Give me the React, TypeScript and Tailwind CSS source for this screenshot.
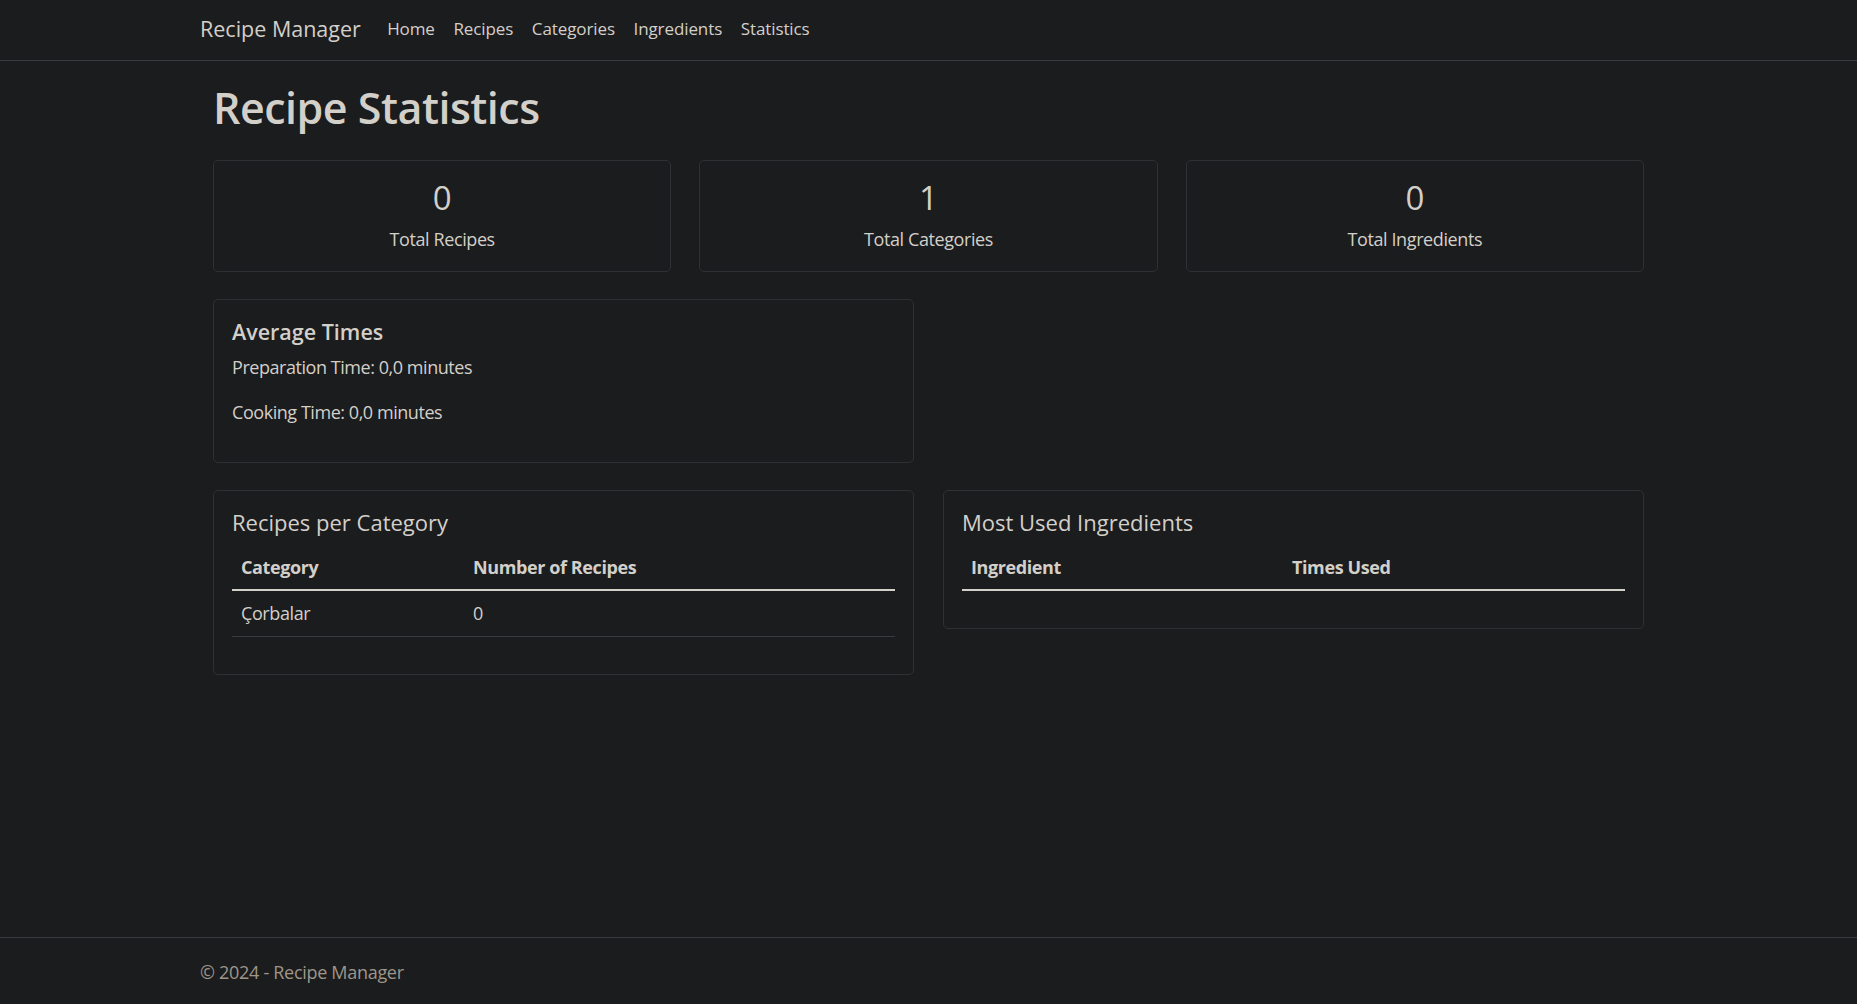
import React from "react";

function StatCard({ value, label }: { value: string; label: string }) {
  return (
    <div className="flex-1 rounded-[5px] border border-[#2e3033] pt-[17px] pb-[18px] text-center">
      <div className="text-[33px] leading-[40px] font-medium">{value}</div>
      <div className="mt-[7px] text-[18px] leading-[28px] tracking-[-0.4px]">{label}</div>
    </div>
  );
}

export default function App() {
  return (
    <div className="flex h-[1004px] flex-col bg-[#1b1c1e] font-['Open_Sans',sans-serif] text-[#d3cfc9]">
      <nav className="h-[61px] border-b border-[#383c3f]">
        <div className="mx-auto flex h-[60px] w-[1457px] items-center pb-[2px]">
          <span className="mr-[17px] text-[21.5px] leading-[28px]">Recipe Manager</span>
          <ul className="flex items-center">
            {["Home", "Recipes", "Categories", "Ingredients", "Statistics"].map((l) => (
              <li key={l} className="px-[9.3px] text-[17px] leading-[26px] tracking-[-0.1px]">
                {l}
              </li>
            ))}
          </ul>
        </div>
      </nav>

      <main className="flex-1">
        <div className="mx-auto w-[1431px] pt-[19px]">
          <h1 className="mb-[25px] text-[43px] leading-[55px] font-semibold tracking-[-0.5px]">Recipe Statistics</h1>

          <div className="flex gap-[28px]">
            <StatCard value="0" label="Total Recipes" />
            <StatCard value="1" label="Total Categories" />
            <StatCard value="0" label="Total Ingredients" />
          </div>

          <div className="mt-[27px] flex gap-[29px]">
            <div className="w-[701px] rounded-[5px] border border-[#2e3033] px-[18px] pt-[19px] pb-[19px]">
              <h5 className="mb-[8px] text-[21.5px] leading-[26px] font-semibold">Average Times</h5>
              <p className="mb-[17px] text-[18px] leading-[28px] tracking-[-0.45px]">Preparation Time: 0,0 minutes</p>
              <p className="mb-[17px] text-[18px] leading-[28px] tracking-[-0.45px]">Cooking Time: 0,0 minutes</p>
            </div>
          </div>

          <div className="mt-[27px] flex items-start gap-[29px]">
            <div className="w-[701px] rounded-[5px] border border-[#2e3033] px-[18px] pt-[17px] pb-[18px]">
              <h5 className="mb-[8px] text-[22px] leading-[28px]">Recipes per Category</h5>
              <table className="mb-[19px] w-full border-collapse text-left text-[18px] leading-[28px] tracking-[-0.4px]">
                <thead>
                  <tr className="border-b-2 border-[#d3cfc9]">
                    <th className="w-[232px] px-[9px] pt-[9px] pb-[8px] font-bold">Category</th>
                    <th className="px-[9px] pt-[9px] pb-[8px] font-bold">Number of Recipes</th>
                  </tr>
                </thead>
                <tbody>
                  <tr className="border-b border-[#383c3f]">
                    <td className="px-[9px] pt-[8px] pb-[9px]">Çorbalar</td>
                    <td className="px-[9px] pt-[8px] pb-[9px]">0</td>
                  </tr>
                </tbody>
              </table>
            </div>

            <div className="w-[701px] rounded-[5px] border border-[#2e3033] px-[18px] pt-[17px] pb-[18px]">
              <h5 className="mb-[8px] text-[22px] leading-[28px]">Most Used Ingredients</h5>
              <table className="mb-[19px] w-full border-collapse text-left text-[18px] leading-[28px] tracking-[-0.4px]">
                <thead>
                  <tr className="border-b-2 border-[#d3cfc9]">
                    <th className="w-[321px] px-[9px] pt-[9px] pb-[8px] font-bold">Ingredient</th>
                    <th className="px-[9px] pt-[9px] pb-[8px] font-bold">Times Used</th>
                  </tr>
                </thead>
                <tbody></tbody>
              </table>
            </div>
          </div>
        </div>
      </main>

      <footer className="h-[67px] border-t border-[#383c3f]">
        <div className="mx-auto w-[1457px] pt-[20px] text-[18px] leading-[28px] tracking-[-0.3px] text-[#9e9689]">
          © 2024 - Recipe Manager
        </div>
      </footer>
    </div>
  );
}
